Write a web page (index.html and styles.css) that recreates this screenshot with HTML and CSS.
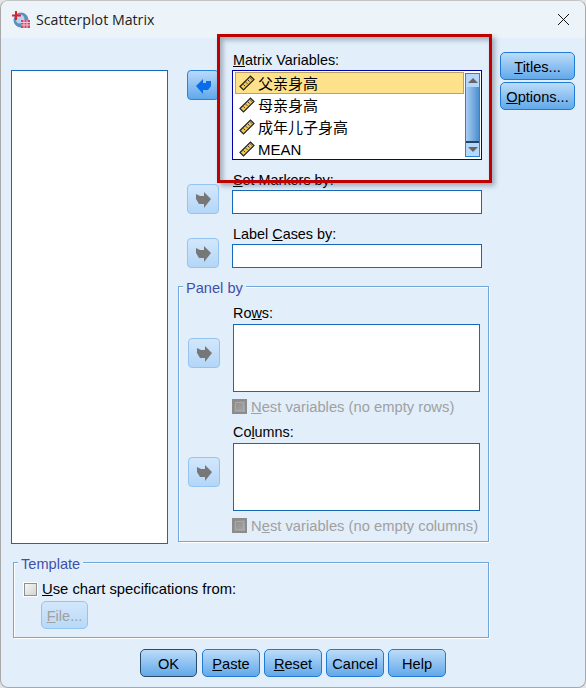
FILE: index.html
```html
<!DOCTYPE html>
<html lang="en">
<head>
    <meta charset="UTF-8">
    <meta name="viewport" content="width=device-width, initial-scale=1.0">
    <title>Scatterplot Matrix</title>
    <link rel="stylesheet" href="styles.css">
</head>
<body>
    <svg class="defs" width="0" height="0">
        <symbol id="ruler" viewBox="0 0 16 16">
            <path d="M1 11.5 11.5 1 15 4.5 4.5 15Z" fill="#f4c94a" stroke="#222" stroke-width="1.2"/>
            <path d="M4.5 9.5l1.6 1.6M6.8 7.2l1.6 1.6M9 5l1.6 1.6M11.2 2.8l1.6 1.6" stroke="#333" stroke-width="1"/>
        </symbol>
        <symbol id="arrow-right" viewBox="0 0 32 30">
            <path d="M24 15l-7-7v4h-4l-4-2v5l3 5h5v4z" fill="#777"/>
        </symbol>
    </svg>

    <div class="window">
        <div class="titlebar">
            <svg class="app-icon" width="18" height="18" viewBox="0 0 18 18">
                <circle cx="9" cy="9" r="7.5" fill="#5d8fc0"/>
                <circle cx="8" cy="8" r="4.5" fill="#b9d3ea"/>
                <rect x="9" y="9" width="9" height="8" fill="#c8486a"/>
                <path d="M9 11.5h9M9 14h9M12 9v8M15 9v8" stroke="#f3c6d2" stroke-width="1"/>
                <path d="M0 4.5h9M4 0v9" stroke="#e0202c" stroke-width="2"/>
            </svg>
            <span class="title">Scatterplot Matrix</span>
            <svg class="close" width="13" height="13" viewBox="0 0 13 13">
                <path d="M1 1l11 11M12 1 1 12" stroke="#111" stroke-width="1"/>
            </svg>
        </div>

        <div class="content">
            <div class="main">
                <div class="source-list"></div>

                <div class="center">
                    <div class="var-row">
                        <label class="var-label"><u>M</u>atrix Variables:</label>
                        <button class="arrow-btn active">
                            <svg width="32" height="30" viewBox="0 0 32 30">
                                <path d="M9 16l7-7v4h3v-2h5v5l-3 4h-5v4z" fill="#0a6ce8"/>
                            </svg>
                        </button>
                        <div class="var-list">
                            <ul class="items">
                                <li class="zh selected"><svg width="16" height="16"><use href="#ruler"/></svg>父亲身高</li>
                                <li class="zh"><svg width="16" height="16"><use href="#ruler"/></svg>母亲身高</li>
                                <li class="zh"><svg width="16" height="16"><use href="#ruler"/></svg>成年儿子身高</li>
                                <li><svg width="16" height="16"><use href="#ruler"/></svg>MEAN</li>
                            </ul>
                            <div class="scrollbar">
                                <div class="scroll-btn"><span class="tri-up"></span></div>
                                <div class="scroll-thumb"></div>
                                <div class="scroll-btn"><span class="tri-down"></span></div>
                            </div>
                        </div>
                    </div>

                    <div class="var-row single">
                        <label class="var-label"><u>S</u>et Markers by:</label>
                        <button class="arrow-btn"><svg width="32" height="30"><use href="#arrow-right"/></svg></button>
                        <input class="field" type="text">
                    </div>

                    <div class="var-row single">
                        <label class="var-label">Label <u>C</u>ases by:</label>
                        <button class="arrow-btn"><svg width="32" height="30"><use href="#arrow-right"/></svg></button>
                        <input class="field" type="text">
                    </div>

                    <fieldset class="group panel">
                        <legend>Panel by</legend>

                        <div class="panel-row">
                            <label class="var-label">Ro<u>w</u>s:</label>
                            <button class="arrow-btn"><svg width="32" height="30"><use href="#arrow-right"/></svg></button>
                            <div class="panel-box"></div>
                            <label class="nest"><input type="checkbox" class="check-off" disabled><span><u>N</u>est variables (no empty rows)</span></label>
                        </div>

                        <div class="panel-row second">
                            <label class="var-label">Co<u>l</u>umns:</label>
                            <button class="arrow-btn"><svg width="32" height="30"><use href="#arrow-right"/></svg></button>
                            <div class="panel-box"></div>
                            <label class="nest"><input type="checkbox" class="check-off" disabled><span>N<u>e</u>st variables (no empty columns)</span></label>
                        </div>
                    </fieldset>
                </div>

                <div class="side">
                    <button class="btn"><u>T</u>itles...</button>
                    <button class="btn"><u>O</u>ptions...</button>
                </div>
            </div>

            <fieldset class="group template">
                <legend>Template</legend>
                <label class="use-spec"><input type="checkbox" class="check"><span><u>U</u>se chart specifications from:</span></label>
                <button class="btn file" disabled><u>F</u>ile...</button>
            </fieldset>

            <div class="actions">
                <button class="btn ok">OK</button>
                <button class="btn"><u>P</u>aste</button>
                <button class="btn"><u>R</u>eset</button>
                <button class="btn">Cancel</button>
                <button class="btn">Help</button>
            </div>
        </div>

        <div class="highlight"></div>
    </div>
</body>
</html>
```

FILE: styles.css
```css
html, body {
    margin: 0;
    padding: 0;
    background: #e4e4e4;
}
body {
    font-family: "Liberation Sans", "Noto Sans CJK SC", sans-serif;
    font-size: 14.6px;
    color: #000;
}
.defs { position: absolute; }
.window {
    position: relative;
    box-sizing: border-box;
    width: 586px;
    height: 688px;
    background: #e2effb;
    border: 1px solid #a8a8a8;
    border-top-color: #c4c4c4;
    border-radius: 8px;
    overflow: hidden;
}

/* title bar */
.titlebar {
    display: flex;
    align-items: center;
    height: 37px;
    padding: 0 15px 0 11px;
    background: #edf4f9;
}
.app-icon { margin-right: 6px; }
.title {
    font-family: "Open Sans", sans-serif;
    font-size: 14.2px;
    color: #222;
    flex: 1;
}

/* main area */
.content { padding-left: 10px; }
.main { display: flex; align-items: flex-start; }
.source-list {
    box-sizing: border-box;
    width: 157px;
    height: 474px;
    margin-top: 32px;
    background: #fff;
    border: 1px solid #1668b8;
}
.center {
    width: 311px;
    margin-left: 10px;
    padding-top: 14px;
}
.side {
    display: flex;
    flex-direction: column;
    gap: 2px;
    width: 75px;
    margin: 14px 0 0 11px;
}
.side .btn { width: 75px; }

/* variable rows */
.var-row {
    display: grid;
    grid-template-columns: 32px 250px;
    column-gap: 13px;
    padding-left: 9px;
}
.var-row.single { margin-top: 12px; }
.var-label {
    grid-column: 2;
    grid-row: 1;
    height: 18px;
    font-size: 14.4px;
    line-height: 16px;
    padding-left: 1px;
}
.var-row .arrow-btn { grid-column: 1; grid-row: 2; }
.var-row.single .arrow-btn { grid-row: 1 / 3; align-self: end; }
.field {
    grid-column: 2;
    grid-row: 2;
    box-sizing: border-box;
    width: 250px;
    height: 24px;
    margin: 0;
    background: #fff;
    border: 1px solid #1668b8;
    border-radius: 0;
}

.arrow-btn {
    width: 32px;
    height: 30px;
    padding: 0;
    background: linear-gradient(#d3e7fb, #b3d6f8);
    border: 1px solid #93c4f2;
    border-radius: 4px;
}
.arrow-btn svg { display: block; margin: -1px; }
.arrow-btn.active {
    background: linear-gradient(#b9dafa, #5fa8ea);
    border-color: #2a83da;
}

/* matrix variable list */
.var-list {
    grid-column: 2;
    grid-row: 2;
    box-sizing: border-box;
    display: flex;
    width: 250px;
    height: 90px;
    background: #fff;
    border: 1px solid #0000a8;
}
.items {
    list-style: none;
    flex: 1;
    margin: 0;
    padding: 1px 1px 0 2px;
    font-size: 15px;
}
.items li {
    box-sizing: border-box;
    display: flex;
    align-items: center;
    gap: 3px;
    height: 22px;
    padding-left: 3px;
    border: 1px solid transparent;
}
.items li.zh { padding-bottom: 2px; }
.items li.zh svg { margin-top: 2px; }
.items li.selected {
    background: #fde28b;
    border-color: #b9a45f;
}
.scrollbar {
    display: flex;
    flex-direction: column;
    box-sizing: border-box;
    width: 15px;
    margin: 2px 1px 2px 0;
    border: 1px solid #2a83da;
}
.scroll-btn {
    display: flex;
    align-items: center;
    justify-content: center;
    height: 13px;
    background: #b5d8fa;
}
.scroll-thumb {
    flex: 1;
    background: linear-gradient(to right, #a9cef2, #4c8ecf);
    border-bottom: 2px solid #23456b;
}
.tri-up, .tri-down {
    width: 0;
    height: 0;
    border-left: 5px solid transparent;
    border-right: 5px solid transparent;
}
.tri-up { border-bottom: 5px solid #666; }
.tri-down { border-top: 5px solid #666; }

/* group boxes */
.group {
    position: relative;
    margin: 0;
    min-width: 0;
    border: 1px solid #6fa6dc;
    box-shadow: 1px 1px 0 #fff, inset 1px 1px 0 #fff;
}
.group legend {
    height: 17px;
    line-height: 20px;
    padding: 0 3px;
    color: #3f4fa8;
    background: #e2effb;
}
.panel {
    box-sizing: border-box;
    width: 311px;
    height: 264px;
    margin-top: 10px;
    padding: 10px 0 0 9px;
}
.panel legend { margin-left: -5px; }
.panel-row {
    display: grid;
    grid-template-columns: 32px 247px;
    column-gap: 13px;
}
.panel-row.second { margin-top: 10px; }
.panel-row .var-label { height: 19px; padding-left: 0; }
.panel-row .arrow-btn { grid-column: 1; grid-row: 2; margin-top: 14px; }
.panel-box {
    grid-column: 2;
    grid-row: 2;
    box-sizing: border-box;
    height: 68px;
    background: #fff;
    border: 1px solid #1668b8;
}
.nest {
    grid-column: 2;
    grid-row: 3;
    display: flex;
    align-items: center;
    gap: 4px;
    height: 15px;
    margin: 7px 0 0 -1px;
    font-size: 14.75px;
    color: #a0a0a0;
    white-space: nowrap;
}
.check-off {
    appearance: none;
    box-sizing: border-box;
    flex: none;
    width: 15px;
    height: 15px;
    margin: 0;
    background: linear-gradient(135deg, #8a8a8a, #a8a8a8);
    border: 2px solid #8c8c8c;
    outline: 1px solid #a9a9a9;
    outline-offset: -4px;
}

.template {
    box-sizing: border-box;
    width: 476px;
    height: 84px;
    margin: 10px 0 0 2px;
    padding: 11px 0 0 10px;
}
.template legend { margin-left: -6px; }
.use-spec {
    display: flex;
    align-items: center;
    gap: 5px;
    height: 14px;
    font-size: 14.8px;
}
.check {
    appearance: none;
    box-sizing: border-box;
    flex: none;
    width: 13px;
    height: 13px;
    margin: 0;
    background: linear-gradient(135deg, #f6f6f6, #d4d4d4);
    border: 1px solid #8e8f8f;
    box-shadow: 0 0 0 1px #fff;
}

/* buttons */
.btn {
    box-sizing: border-box;
    width: 58px;
    height: 28px;
    padding: 1px 0 0;
    font: inherit;
    color: #000;
    background: linear-gradient(#bcdcf9, #62a8ea);
    border: 1px solid #1f7bd6;
    border-radius: 5px;
}
.btn.file {
    display: block;
    width: 47px;
    margin: 5px 0 0 17px;
    color: #a0a0a0;
    background: linear-gradient(#d3e7fb, #b8d9f8);
    border-color: #93c4f2;
}
.actions {
    display: flex;
    gap: 4px;
    margin: 11px 0 0 129px;
}
.btn.ok {
    width: 57px;
    margin-right: 1px;
    border-color: #2a4a6c;
}

/* annotation frame drawn over the dialog */
.highlight {
    position: absolute;
    left: 216px;
    top: 33px;
    box-sizing: border-box;
    width: 275px;
    height: 149px;
    border: 3px solid #c00000;
    box-shadow: 3px 3px 5px rgba(60, 70, 90, 0.4), inset 3px 3px 5px rgba(60, 70, 90, 0.4);
    pointer-events: none;
}
```
